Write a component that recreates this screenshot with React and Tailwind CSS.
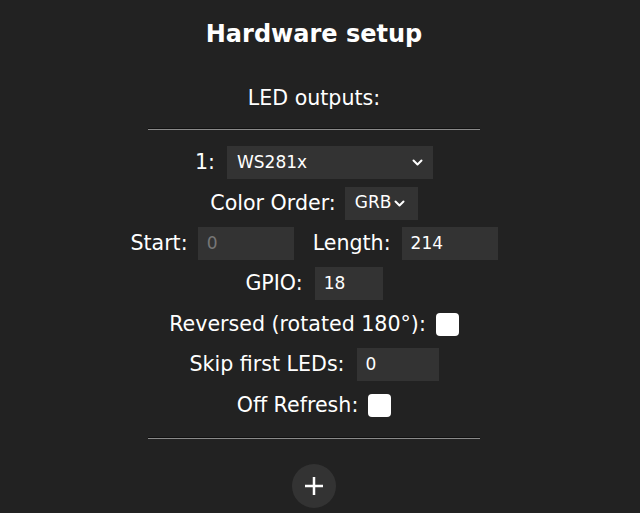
import React from "react";

function Chevron() {
  return (
    <svg width="11" height="7" viewBox="0 0 11 7" className="shrink-0">
      <polyline points="1.5,1.5 5.5,5.5 9.5,1.5" fill="none" stroke="#fff" strokeWidth="2" strokeLinecap="round" strokeLinejoin="round" />
    </svg>
  );
}

function Row({ children, className = "" }) {
  return <div className={"flex h-[40.4px] items-center justify-center " + className}>{children}</div>;
}

function Field({ w, value, muted }) {
  return (
    <div className={"flex h-[33px] items-center bg-[#333] pl-[9px] text-[17px] " + w + " " + (muted ? "text-[#777]" : "text-white")}>
      {value}
    </div>
  );
}

function Check() {
  return <div className="h-[23px] w-[23px] rounded-[4px] bg-white" />;
}

export default function App() {
  return (
    <div className="min-h-[513px] w-full bg-[#222] text-white" style={{ fontFamily: '"DejaVu Sans", Verdana, sans-serif' }}>
      <div className="w-[628px]">
        <div className="flex h-[68px] items-center justify-center text-[24px] font-bold">Hardware setup</div>
        <div className="flex h-[60px] items-center justify-center text-[20.6px]">LED outputs:</div>
        <div className="mx-auto w-[332px]">
          <div className="h-px bg-[#111]" />
          <div className="h-px bg-[#8a8a8a]" />
        </div>
        <div className="h-[12.5px]" />
        <div className="text-[20.6px]">
          <Row>
            <span>1:</span>
            <div className="ml-[12px] flex h-[33px] w-[206px] items-center justify-between bg-[#333] pl-[10px] pr-[10px] text-[17px]">
              <span>WS281x</span>
              <Chevron />
            </div>
          </Row>
          <Row>
            <span>Color Order:</span>
            <div className="ml-[9px] flex h-[33px] w-[73px] items-center gap-[3px] bg-[#333] pl-[10px] text-[17px]">
              <span>GRB</span>
              <Chevron />
            </div>
          </Row>
          <Row>
            <span>Start:</span>
            <div className="ml-[10px]">
              <Field w="w-[96px]" value="0" muted />
            </div>
            <span className="ml-[19px]">Length:</span>
            <div className="ml-[11px]">
              <Field w="w-[96px]" value="214" />
            </div>
          </Row>
          <Row>
            <span>GPIO:</span>
            <div className="ml-[12px]">
              <Field w="w-[68px]" value="18" />
            </div>
          </Row>
          <Row>
            <span>Reversed (rotated 180°):</span>
            <div className="ml-[10px]">
              <Check />
            </div>
          </Row>
          <Row>
            <span>Skip first LEDs:</span>
            <div className="ml-[12px]">
              <Field w="w-[82px]" value="0" />
            </div>
          </Row>
          <Row>
            <span>Off Refresh:</span>
            <div className="ml-[10px]">
              <Check />
            </div>
          </Row>
        </div>
        <div className="h-[12px]" />
        <div className="mx-auto w-[332px]">
          <div className="h-px bg-[#111]" />
          <div className="h-px bg-[#8a8a8a]" />
        </div>
        <div className="h-[24.5px]" />
        <div className="mx-auto flex h-[44px] w-[44px] items-center justify-center rounded-full bg-[#333]">
          <svg width="18" height="18" viewBox="0 0 18 18">
            <rect x="7.75" y="0" width="2.5" height="18" fill="#fff" />
            <rect x="0" y="7.75" width="18" height="2.5" fill="#fff" />
          </svg>
        </div>
      </div>
    </div>
  );
}
